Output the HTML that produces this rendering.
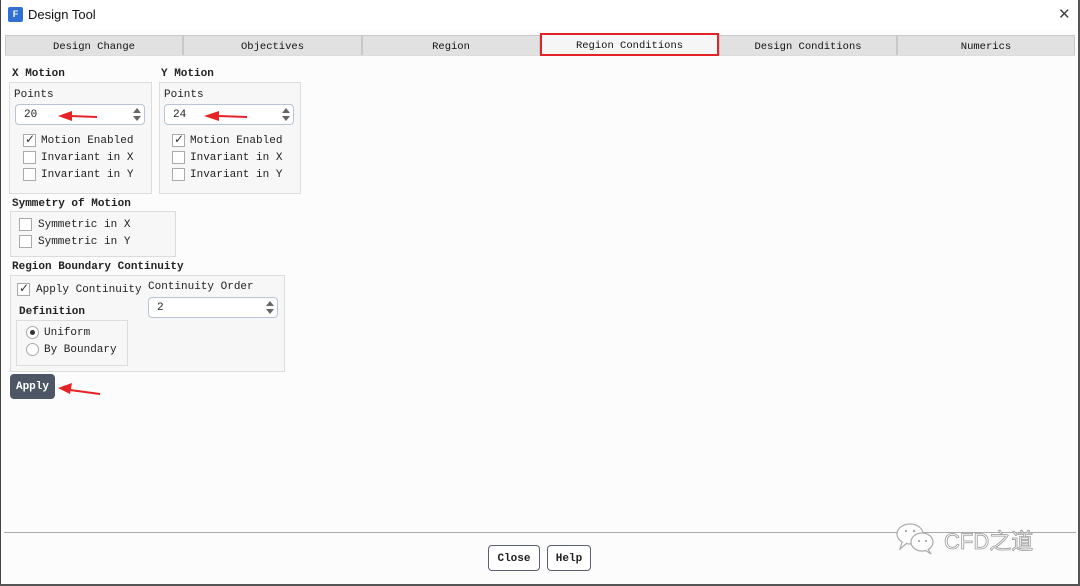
<!DOCTYPE html>
<html><head><meta charset="utf-8"><style>
*{box-sizing:border-box;margin:0;padding:0}
body{width:1080px;height:586px;background:#fcfcfc;position:relative;overflow:hidden;font-family:"Liberation Mono","Noto Sans CJK SC",monospace;font-size:11px;color:#222}
.a{position:absolute}
.tab{position:absolute;top:35px;height:20px;background:#e1e1e1;border:1px solid #c8c8c8;border-bottom:none;text-align:center;line-height:22px;font-size:10.5px;color:#111}
.grp{position:absolute;border:1px solid #dcdcdc;background:#f7f7f7}
.lbl{position:absolute;font-weight:bold;font-size:11px;color:#222;margin-top:1px}
.cb{position:absolute;width:13px;height:13px;border:1px solid #aaa;background:#fff}
.t{position:absolute;font-size:11px;white-space:nowrap;margin-top:1px}
.spin{position:absolute;height:21px;border:1px solid #b8c4d4;border-radius:4px;background:#fff;padding-left:8px;line-height:21px;font-size:11px}
.spin:after{content:"";position:absolute;right:3px;top:3px;border:4px solid transparent;border-bottom:5px solid #666;border-top:0}
.spin:before{content:"";position:absolute;right:3px;bottom:3px;border:4px solid transparent;border-top:5px solid #666;border-bottom:0}
.chk:after{content:"✓";position:absolute;left:1px;top:-3px;font-size:12px;color:#333;font-family:"DejaVu Sans",sans-serif}
.rd{position:absolute;width:13px;height:13px;border:1px solid #aaa;border-radius:50%;background:#fff}
.btn{position:absolute;height:26px;border:1px solid #5a6070;border-radius:4px;background:#fff;font-weight:bold;text-align:center;line-height:26px;font-size:11px}
</style></head><body>
<div class="a" style="left:0;top:0;width:1080px;height:30px;background:#fff"></div>
<div class="a" style="left:8px;top:7px;width:15px;height:15px;background:#2f6fd6;border-radius:2px;color:#fff;font:bold 9px 'Liberation Sans';text-align:center;line-height:15px">F</div>
<div class="a" style="left:28px;top:7px;font:13px 'Liberation Sans',sans-serif;color:#111">Design Tool</div>
<div class="a" style="left:1058px;top:5px;font:15px 'DejaVu Sans',sans-serif;color:#444">✕</div>
<div class="a" style="left:0;top:0;width:1px;height:586px;background:#444"></div>
<div class="a" style="left:1078px;top:0;width:2px;height:586px;background:#555"></div>
<div class="a" style="left:0;top:584px;width:1080px;height:2px;background:#555"></div>
<div class="a" style="left:5px;top:55px;width:1070px;height:1px;background:#ddd"></div>

<div class="tab" style="left:5px;width:178px">Design Change</div>
<div class="tab" style="left:183px;width:179px">Objectives</div>
<div class="tab" style="left:362px;width:178px">Region</div>
<div class="tab" style="left:540px;width:179px;background:#f6f6f6;border:2px solid #e52226;top:33px;height:23px">Region Conditions</div>
<div class="tab" style="left:719px;width:178px">Design Conditions</div>
<div class="tab" style="left:897px;width:178px">Numerics</div>

<div class="lbl" style="left:12px;top:67px">X Motion</div>
<div class="grp" style="left:9px;top:82px;width:143px;height:112px"></div>
<div class="t" style="left:14px;top:88px">Points</div>
<div class="spin" style="left:15px;top:104px;width:130px">20</div>
<div class="cb chk" style="left:23px;top:134px"></div><div class="t" style="left:41px;top:134px">Motion Enabled</div>
<div class="cb" style="left:23px;top:151px"></div><div class="t" style="left:41px;top:151px">Invariant in X</div>
<div class="cb" style="left:23px;top:168px"></div><div class="t" style="left:41px;top:168px">Invariant in Y</div>

<div class="lbl" style="left:161px;top:67px">Y Motion</div>
<div class="grp" style="left:159px;top:82px;width:142px;height:112px"></div>
<div class="t" style="left:164px;top:88px">Points</div>
<div class="spin" style="left:164px;top:104px;width:130px">24</div>
<div class="cb chk" style="left:172px;top:134px"></div><div class="t" style="left:190px;top:134px">Motion Enabled</div>
<div class="cb" style="left:172px;top:151px"></div><div class="t" style="left:190px;top:151px">Invariant in X</div>
<div class="cb" style="left:172px;top:168px"></div><div class="t" style="left:190px;top:168px">Invariant in Y</div>

<div class="lbl" style="left:12px;top:197px">Symmetry of Motion</div>
<div class="grp" style="left:10px;top:211px;width:166px;height:46px"></div>
<div class="cb" style="left:19px;top:218px"></div><div class="t" style="left:38px;top:218px">Symmetric in X</div>
<div class="cb" style="left:19px;top:235px"></div><div class="t" style="left:38px;top:235px">Symmetric in Y</div>

<div class="lbl" style="left:12px;top:260px">Region Boundary Continuity</div>
<div class="grp" style="left:10px;top:275px;width:275px;height:97px"></div>
<div class="cb chk" style="left:17px;top:283px"></div><div class="t" style="left:36px;top:283px">Apply Continuity</div>
<div class="t" style="left:148px;top:280px">Continuity Order</div>
<div class="spin" style="left:148px;top:297px;width:130px">2</div>
<div class="lbl" style="left:19px;top:305px">Definition</div>
<div class="grp" style="left:16px;top:320px;width:112px;height:46px"></div>
<div class="rd" style="left:26px;top:326px"></div><div class="a" style="left:30px;top:330px;width:5px;height:5px;border-radius:50%;background:#333"></div>
<div class="t" style="left:44px;top:326px">Uniform</div>
<div class="rd" style="left:26px;top:343px"></div><div class="t" style="left:44px;top:343px">By Boundary</div>

<div class="a" style="left:10px;top:374px;width:45px;height:25px;background:#4d5665;border-radius:4px;color:#fff;font-weight:bold;text-align:center;line-height:26px">Apply</div>

<svg class="a" style="left:0;top:0" width="300" height="400">
<g fill="#e52226" stroke="#e52226" stroke-width="2">
<line x1="70" y1="116" x2="97" y2="117"/><polygon points="58,116 72,111 72,121" stroke="none"/>
<line x1="218" y1="116" x2="247" y2="117"/><polygon points="204,116 219,111 219,121" stroke="none"/>
<line x1="70" y1="390" x2="100" y2="394"/><polygon points="58,388 72,383 70,394" stroke="none"/>
</g></svg>

<div class="a" style="left:4px;top:532px;width:1072px;height:1px;background:#aaa"></div>
<div class="btn" style="left:488px;top:545px;width:52px">Close</div>
<div class="btn" style="left:547px;top:545px;width:44px">Help</div>
<svg class="a" style="left:895px;top:522px" width="45" height="34">
<g fill="#fff" stroke="#aaa" stroke-width="1.2">
<ellipse cx="15" cy="12" rx="13" ry="10"/><path d="M7 20 L5 27 L12 21"/>
<ellipse cx="27" cy="20" rx="11" ry="9"/><path d="M33 27 L36 32 L30 28"/>
</g>
<g fill="#aaa"><circle cx="11" cy="9" r="1.2"/><circle cx="19" cy="9" r="1.2"/><circle cx="24" cy="19" r="1.1"/><circle cx="31" cy="19" r="1.1"/></g>
</svg>
<div class="a" style="left:944px;top:524px;font:22px 'Liberation Sans','Noto Sans CJK SC',sans-serif;color:#fff;-webkit-text-stroke:0.8px #999">CFD之道</div>
</body></html>
